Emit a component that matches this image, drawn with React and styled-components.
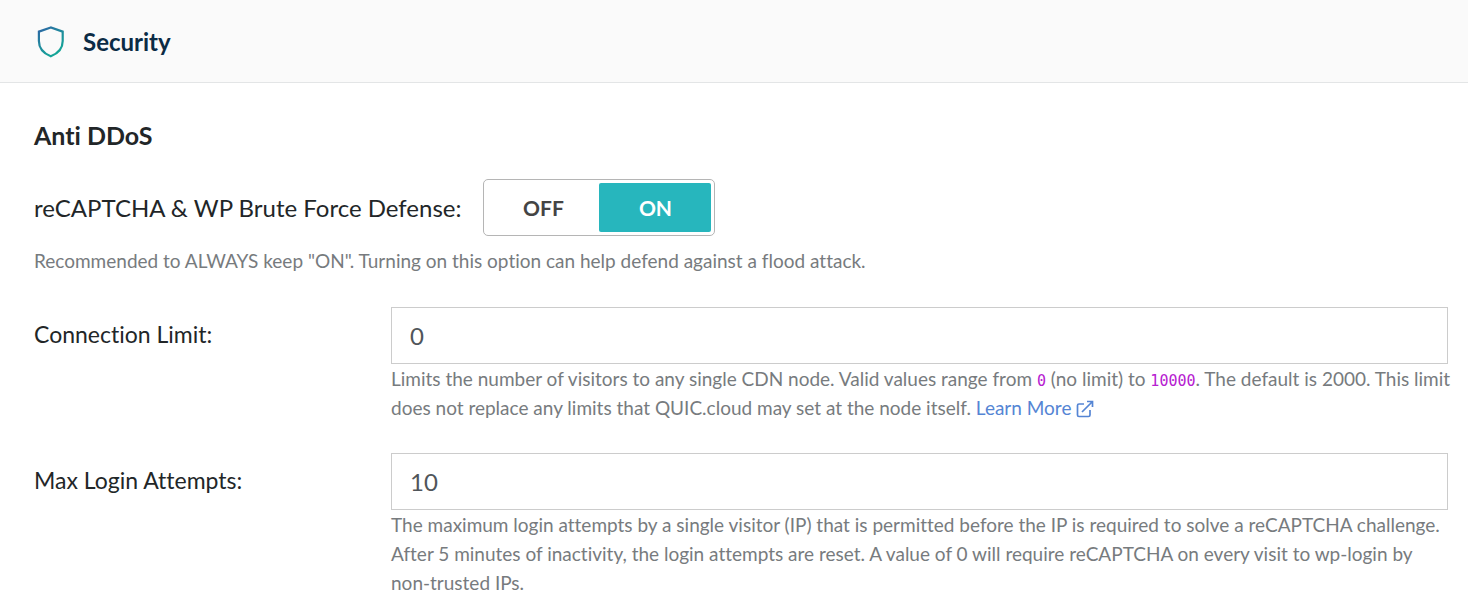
import React, { useState } from 'react';
import styled, { createGlobalStyle } from 'styled-components';

const GlobalStyle = createGlobalStyle`
  * {
    box-sizing: border-box;
  }

  body {
    margin: 0;
    background: #fff;
    color: #222628;
    font-family: Lato, sans-serif;
    font-variant-ligatures: none;
  }
`;

const Header = styled.header`
  display: flex;
  align-items: center;
  gap: 18px;
  padding: 25px 36px 23px;
  background: #fafafa;
  border-bottom: 1px solid #e3e5e6;
`;

const HeaderTitle = styled.h1`
  margin: 0;
  color: #0b2b45;
  font-size: 24px;
  font-weight: 700;
  line-height: 34px;
`;

const Content = styled.main`
  padding: 34px 20px 0 34px;
`;

const SectionTitle = styled.h2`
  margin: 0;
  font-size: 25px;
  font-weight: 700;
  line-height: 36px;
`;

const SwitchRow = styled.fieldset`
  display: flex;
  align-items: center;
  gap: 22px;
  margin: 26px 0 0;
  padding: 0;
  border: 0;
`;

const SwitchLabel = styled.span`
  font-size: 24px;
  line-height: 36px;
`;

const Switch = styled.div`
  display: flex;
  padding: 3px;
  border: 1px solid #b5b5b5;
  border-radius: 5px;
`;

const SwitchOption = styled.label`
  position: relative;
  width: 112px;
  border-radius: 2px;
  background: ${props => (props.$active ? '#27b6bd' : 'transparent')};
  color: ${props => (props.$active ? '#fff' : '#444')};
  font-size: 21px;
  font-weight: 700;
  line-height: 49px;
  text-align: center;
  cursor: pointer;
`;

const HiddenRadio = styled.input`
  position: absolute;
  opacity: 0;
  pointer-events: none;
`;

const Help = styled.p`
  margin: 0 -4px 0 0;
  color: #777b7e;
  font-size: 19px;
  line-height: 29px;
`;

const SwitchHelp = styled(Help)`
  margin-top: 9px;
  line-height: 31px;
`;

const Field = styled.div`
  display: grid;
  grid-template-columns: 357px 1fr;
  margin-top: 31px;
`;

const FieldLabel = styled.label`
  font-size: 23px;
  line-height: 54px;
`;

const Input = styled.input`
  display: block;
  width: 100%;
  height: 57px;
  padding: 0 18px;
  border: 1px solid #ccc;
  border-radius: 0;
  background: #fff;
  color: #50555a;
  font-family: inherit;
  font-size: 24px;
`;

const Code = styled.code`
  color: #b620d0;
  font-family: "DejaVu Sans Mono", monospace;
  font-size: 15px;
  line-height: 1;
`;

const Link = styled.a`
  color: #5585d4;
  text-decoration: none;
`;

const LinkIcon = styled.svg`
  vertical-align: -3px;
`;

const Shield = () => (
    <svg width="29" height="34" viewBox="0 0 29 34" fill="none" aria-hidden="true">
        <defs>
            <linearGradient id="shield" x1="0" y1="0" x2="0.6" y2="1">
                <stop offset="0" stopColor="#2d64a5" />
                <stop offset="0.5" stopColor="#208a9d" />
                <stop offset="1" stopColor="#14a697" />
            </linearGradient>
        </defs>
        <path
            d="M14.8 2.500L2.900 6.600V16C2.900 23.300 7.800 28.500 14.800 31.300C21.800 28.500 26.700 23.300 26.700 16V6.600Z"
            stroke="url(#shield)"
            strokeWidth="2.200"
        />
    </svg>
);

const External = () => (
    <LinkIcon width="18" height="18" viewBox="0 0 18 18" fill="none" stroke="currentColor" strokeWidth="1.700" aria-hidden="true">
        <path d="M8 4H3Q1.500 4 1.500 5.500V15Q1.500 16.500 3 16.500H12.500Q14 16.500 14 15V10" />
        <path d="M11 1.500H16.500V7M16.500 1.500L6 12" />
    </LinkIcon>
);

export default function App() {
    const [defense, setDefense] = useState('ON');

    return (
        <>
            <GlobalStyle />
            <Header>
                <Shield />
                <HeaderTitle>Security</HeaderTitle>
            </Header>
            <Content>
                <SectionTitle>Anti DDoS</SectionTitle>
                <SwitchRow aria-labelledby="defense-label">
                    <SwitchLabel id="defense-label">reCAPTCHA &amp; WP Brute Force Defense:</SwitchLabel>
                    <Switch>
                        {['OFF', 'ON'].map(value => (
                            <SwitchOption key={value} $active={defense === value}>
                                <HiddenRadio
                                    type="radio"
                                    name="defense"
                                    checked={defense === value}
                                    onChange={() => setDefense(value)}
                                />
                                {value}
                            </SwitchOption>
                        ))}
                    </Switch>
                </SwitchRow>
                <SwitchHelp>
                    Recommended to ALWAYS keep "ON". Turning on this option can help defend against a flood attack.
                </SwitchHelp>
                <Field>
                    <FieldLabel htmlFor="connection-limit">Connection Limit:</FieldLabel>
                    <div>
                        <Input id="connection-limit" type="text" defaultValue="0" />
                        <Help>
                            Limits the number of visitors to any single CDN node. Valid values range from <Code>0</Code> (no
                            limit) to <Code>10000</Code>. The default is 2000. This limit does not replace any limits that
                            QUIC.cloud may set at the node itself. <Link href="#learn-more">Learn More <External /></Link>
                        </Help>
                    </div>
                </Field>
                <Field>
                    <FieldLabel htmlFor="login-attempts">Max Login Attempts:</FieldLabel>
                    <div>
                        <Input id="login-attempts" type="text" defaultValue="10" />
                        <Help>
                            The maximum login attempts by a single visitor (IP) that is permitted before the IP is required
                            to solve a reCAPTCHA challenge. After 5 minutes of inactivity, the login attempts are reset. A
                            value of 0 will require reCAPTCHA on every visit to wp-login by non-trusted IPs.
                        </Help>
                    </div>
                </Field>
            </Content>
        </>
    );
}
